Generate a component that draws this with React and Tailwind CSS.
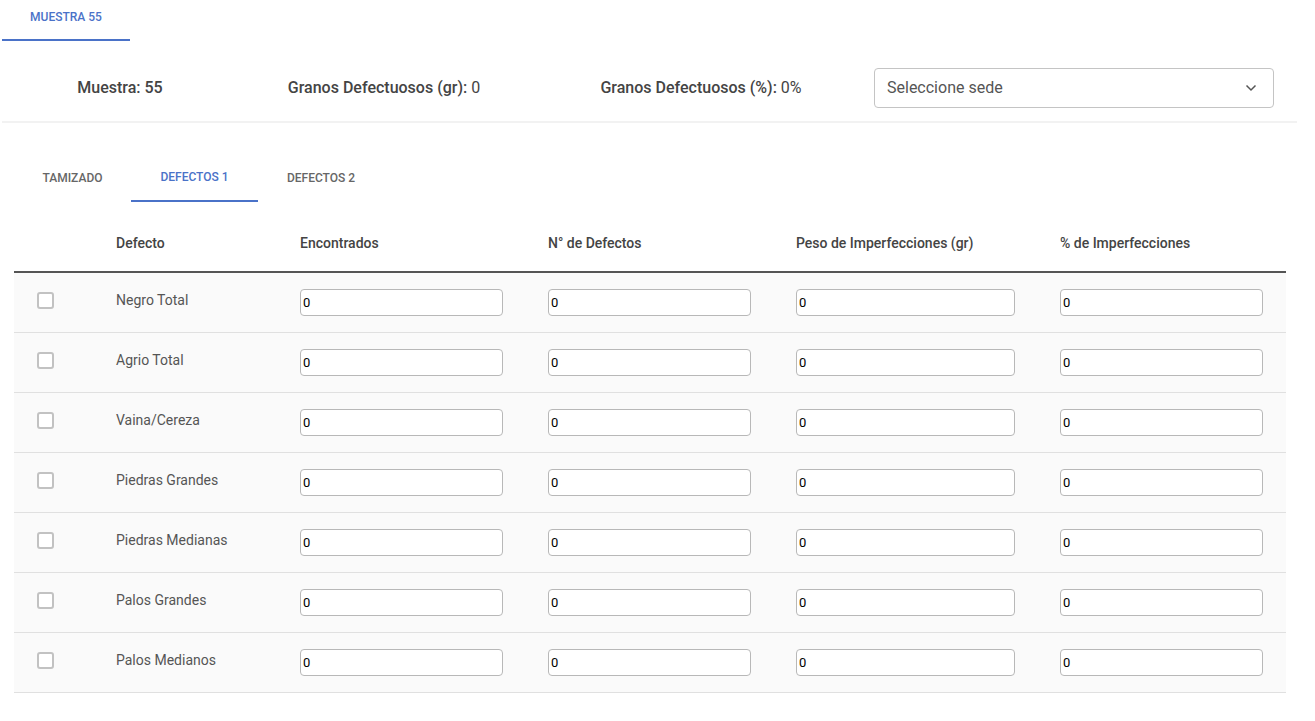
import React from "react";

const rows = [
  "Negro Total",
  "Agrio Total",
  "Vaina/Cereza",
  "Piedras Grandes",
  "Piedras Medianas",
  "Palos Grandes",
  "Palos Medianos",
];

const grid = "grid grid-cols-[86px_184px_248px_248px_264px_242px]";

function Input({ w }) {
  return (
    <input
      defaultValue="0"
      className={`${w} h-[27px] bg-white border border-[#b8b8b8] rounded-[4px] px-[2px] text-[13px] text-black outline-none`}
      style={{ fontFamily: "Roboto, Arial, sans-serif" }}
    />
  );
}

export default function App() {
  return (
    <div
      className="w-[1315px] min-h-[721px] bg-white text-[#444]"
      style={{ fontFamily: "Roboto, 'Liberation Sans', Arial, sans-serif" }}
    >
      {/* top tab */}
      <div className="h-[41px] flex pl-[2px]">
        <div className="w-[128px] h-full flex flex-col items-center">
          <div className="pt-[9px] text-[12px] font-medium text-[#4a72c8] leading-[16px]">MUESTRA 55</div>
          <div className="mt-auto h-[2px] w-full bg-[#4a72c8]" />
        </div>
      </div>

      {/* info row */}
      <div className="flex items-center pt-[27px] pb-[13px]">
        <div className="w-[240px] text-center text-[16px] font-medium text-[#444]">Muestra: 55</div>
        <div className="w-[288px] text-center text-[16px] text-[#444]">
          <span className="font-medium">Granos Defectuosos (gr):</span> 0
        </div>
        <div className="w-[346px] text-center text-[16px] text-[#444]">
          <span className="font-medium">Granos Defectuosos (%):</span> 0%
        </div>
        <div className="w-[400px] h-[40px] border border-[#c4c4c4] rounded-[4px] flex items-center justify-between pl-[12px] pr-[16px]">
          <span className="text-[16px] text-[#555]">Seleccione sede</span>
          <svg width="12" height="8" viewBox="0 0 12 8">
            <polyline points="1.5,1.5 6,6 10.5,1.5" fill="none" stroke="#555" strokeWidth="1.5" />
          </svg>
        </div>
      </div>
      <div className="h-[2px] bg-[#f2f2f2] ml-[2px] mr-[18px]" />

      {/* sub tabs */}
      <div className="pl-[14px] pr-[29px]">
        <div className="mt-[31px] flex h-[48px]">
          <div className="w-[117px] flex items-center justify-center text-[12px] font-medium text-[#666]">TAMIZADO</div>
          <div className="w-[127px] flex flex-col">
            <div className="flex-1 flex items-center justify-center text-[12px] font-medium text-[#4a72c8]">DEFECTOS 1</div>
            <div className="h-[2px] bg-[#4a72c8]" />
          </div>
          <div className="w-[126px] flex items-center justify-center text-[12px] font-medium text-[#666]">DEFECTOS 2</div>
        </div>

        {/* table header */}
        <div className={`${grid} mt-[15px] h-[56px] pb-[1px] items-center text-[14px] font-medium text-[#444] border-b-2 border-[#555]`}>
          <div />
          <div className="pl-[16px]">Defecto</div>
          <div className="pl-[16px]">Encontrados</div>
          <div className="pl-[16px]">N° de Defectos</div>
          <div className="pl-[16px]">Peso de Imperfecciones (gr)</div>
          <div className="pl-[16px]">% de Imperfecciones</div>
        </div>

        {rows.map((r) => (
          <div key={r} className={`${grid} h-[60px] items-center bg-[#fafafa] border-b border-[#e0e0e0]`}>
            <div className="pl-[23px] -mt-[4px]">
              <div className="w-[17px] h-[17px] border-2 border-[#c2c2c2] rounded-[3px] bg-white" />
            </div>
            <div className="pl-[16px] text-[14px] text-[#555] -mt-[4px]">{r}</div>
            <div className="pl-[16px]"><Input w="w-[203px]" /></div>
            <div className="pl-[16px]"><Input w="w-[203px]" /></div>
            <div className="pl-[16px]"><Input w="w-[219px]" /></div>
            <div className="pl-[16px]"><Input w="w-[203px]" /></div>
          </div>
        ))}
      </div>
    </div>
  );
}
